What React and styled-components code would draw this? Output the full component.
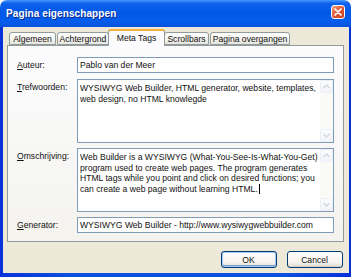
import React from "react";
import styled, { createGlobalStyle } from "styled-components";

const GlobalStyle = createGlobalStyle`
	html, body {
		margin: 0;
		padding: 0;
		background: #ffffff;
	}
	body {
		font-family: "Liberation Sans", Arial, sans-serif;
		font-size: 8.6px;
		color: #111111;
	}
`;

function ScrollArrow({ up }) {
	return (
		<svg width="7" height="5" viewBox="0 0 7 5">
			<path
				d={up ? "M0.5 4 L3.5 1 L6.5 4" : "M0.5 1 L3.5 4 L6.5 1"}
				fill="none"
				stroke="#d3d7df"
				strokeWidth="1.4"
			/>
		</svg>
	);
}

function TextBox({ lines, caret }) {
	return (
		<Box>
			<BoxText>
				{lines.map((line, i) => (
					<Line key={i}>
						{line}
						{caret && i === lines.length - 1 && <Caret />}
					</Line>
				))}
			</BoxText>
			<Scrollbar>
				<ScrollButton>
					<ScrollArrow up />
				</ScrollButton>
				<ScrollButton>
					<ScrollArrow />
				</ScrollButton>
			</Scrollbar>
		</Box>
	);
}

function App() {
	return (
		<>
			<GlobalStyle />
			<Window>
				<TitleBar>
					<Title>Pagina eigenschappen</Title>
					<CloseButton>
						<svg width="8" height="8" viewBox="0 0 8 8">
							<path
								d="M1 1 L7 7 M7 1 L1 7"
								stroke="#ffffff"
								strokeWidth="1.7"
								strokeLinecap="round"
							/>
						</svg>
					</CloseButton>
				</TitleBar>
				<Frame>
					<Body>
						<Tabs>
							<Tab width={47}>Algemeen</Tab>
							<Tab width={52}>Achtergrond</Tab>
							<Tab width={57} selected>
								Meta Tags
							</Tab>
							<Tab width={45}>Scrollbars</Tab>
							<Tab width={80}>Pagina overgangen</Tab>
						</Tabs>
						<Panel>
							<Row>
								<Label>
									<u>A</u>uteur:
								</Label>
								<TextInput>Pablo van der Meer</TextInput>
							</Row>
							<Row>
								<Label>
									<u>T</u>refwoorden:
								</Label>
								<TextBox
									lines={[
										"WYSIWYG Web Builder, HTML generator, website, templates,",
										"web design, no HTML knowlegde",
									]}
								/>
							</Row>
							<Row>
								<Label>
									<u>O</u>mschrijving:
								</Label>
								<TextBox
									caret
									lines={[
										"Web Builder is a WYSIWYG (What-You-See-Is-What-You-Get)",
										"program used to create web pages. The program generates",
										"HTML tags while you point and click on desired functions; you",
										"can create a web page without learning HTML.",
									]}
								/>
							</Row>
							<Row>
								<Label>
									<u>G</u>enerator:
								</Label>
								<TextInput>
									WYSIWYG Web Builder - http://www.wysiwygwebbuilder.com
								</TextInput>
							</Row>
						</Panel>
						<ButtonRow>
							<Button isDefault>OK</Button>
							<Button>Cancel</Button>
						</ButtonRow>
					</Body>
				</Frame>
			</Window>
		</>
	);
}

export default App;

const Window = styled.div`
	width: 351px;
	height: 277px;
	display: flex;
	flex-direction: column;
	border-radius: 7px 7px 0 0;
	overflow: hidden;
`;

const TitleBar = styled.div`
	height: 27px;
	flex: none;
	display: flex;
	align-items: flex-start;
	justify-content: space-between;
	padding: 0 6px;
	box-sizing: border-box;
	background: linear-gradient(
		#4a97ff 0%,
		#0e63ec 12%,
		#0058e8 45%,
		#065ceb 80%,
		#0a52dc 100%
	);
`;

const Title = styled.div`
	padding-top: 8px;
	line-height: 12px;
	font-size: 10px;
	font-weight: bold;
	color: #ffffff;
	text-shadow: 1px 1px 0 #0a2a8f;
	letter-spacing: 0.1px;
`;

const CloseButton = styled.div`
	margin-top: 5px;
	width: 14px;
	height: 14px;
	box-sizing: border-box;
	border: 1px solid #ffffff;
	border-radius: 3px;
	background: linear-gradient(135deg, #f0a48a 0%, #e2593a 45%, #c8401f 100%);
	display: flex;
	align-items: center;
	justify-content: center;
`;

const Frame = styled.div`
	flex: 1;
	display: flex;
	padding: 0 3px 4px 3px;
	background: linear-gradient(90deg, #0831d9, #0a50e0 20%, #0a50e0 80%, #0831d9);
`;

const Body = styled.div`
	flex: 1;
	display: flex;
	flex-direction: column;
	padding: 2px 5px 5px 4px;
	background: #ece9d8;
`;

const Tabs = styled.div`
	height: 16px;
	display: flex;
	align-items: flex-end;
	padding-left: 2px;
	position: relative;
	z-index: 1;
`;

const Tab = styled.div`
	width: ${(p) => p.width}px;
	height: ${(p) => (p.selected ? 17 : 13)}px;
	margin: ${(p) => (p.selected ? "0 -1px -1px -2px" : "0 1px 0 0")};
	box-sizing: border-box;
	display: flex;
	align-items: center;
	justify-content: center;
	white-space: nowrap;
	border: 1px solid #919b9c;
	border-bottom: ${(p) => (p.selected ? "none" : "1px solid #919b9c")};
	border-top: ${(p) => (p.selected ? "2px solid #f6b03c" : "1px solid #919b9c")};
	border-radius: 3px 3px 0 0;
	padding-bottom: ${(p) => (p.selected ? 2 : 0)}px;
	background: ${(p) =>
		p.selected ? "#fcfcfe" : "linear-gradient(#ffffff, #f3f3ef 60%, #e6e4dc)"};
`;

const Panel = styled.div`
	height: 197px;
	box-sizing: border-box;
	display: flex;
	flex-direction: column;
	gap: 5px;
	padding: 11px 9px 8px 9px;
	border: 1px solid #919b9c;
	background: linear-gradient(#fcfcfe, #f4f3ee);
`;

const Row = styled.div`
	display: flex;
	align-items: flex-start;
	&:first-child {
		margin-bottom: 1px;
	}
`;

const Label = styled.div`
	width: 60px;
	flex: none;
	padding-top: 3px;
	line-height: 10.5px;
	white-space: nowrap;
`;

const TextInput = styled.div`
	flex: 1;
	height: 16px;
	box-sizing: border-box;
	padding: 2px 2px;
	line-height: 10.5px;
	white-space: nowrap;
	overflow: hidden;
	border: 1px solid #7f9db9;
	background: #ffffff;
`;

const Box = styled.div`
	flex: 1;
	height: 64px;
	box-sizing: border-box;
	display: flex;
	border: 1px solid #7f9db9;
	background: #ffffff;
`;

const BoxText = styled.div`
	flex: 1;
	padding: 3px 2px;
	line-height: 10.5px;
	overflow: hidden;
`;

const Line = styled.div`
	white-space: nowrap;
`;

const Caret = styled.span`
	display: inline-block;
	width: 1px;
	height: 10px;
	margin-left: 1px;
	vertical-align: -2px;
	background: #000000;
`;

const Scrollbar = styled.div`
	width: 13px;
	flex: none;
	display: flex;
	flex-direction: column;
	justify-content: space-between;
	background: #fafaf7;
`;

const ScrollButton = styled.div`
	height: 13px;
	box-sizing: border-box;
	display: flex;
	align-items: center;
	justify-content: center;
	border: 1px solid #eceff6;
	border-radius: 2px;
	background: linear-gradient(#fcfcfe, #f2f4f9);
`;

const ButtonRow = styled.div`
	display: flex;
	justify-content: flex-end;
	gap: 10px;
	margin-top: 9px;
	padding-right: 1px;
`;

const Button = styled.div`
	width: 56px;
	height: 17px;
	box-sizing: border-box;
	display: flex;
	align-items: center;
	justify-content: center;
	border: 1px solid #003c74;
	border-radius: 3px;
	background: linear-gradient(#ffffff, #f4f3ee 70%, #dcd8cc);
	box-shadow: ${(p) =>
		p.isDefault
			? "inset 0 0 0 1px #a9c4f5, inset 0 -1px 0 1px #7da2ce"
			: "inset 0 -1px 0 0 #d6d0c5"};
`;
